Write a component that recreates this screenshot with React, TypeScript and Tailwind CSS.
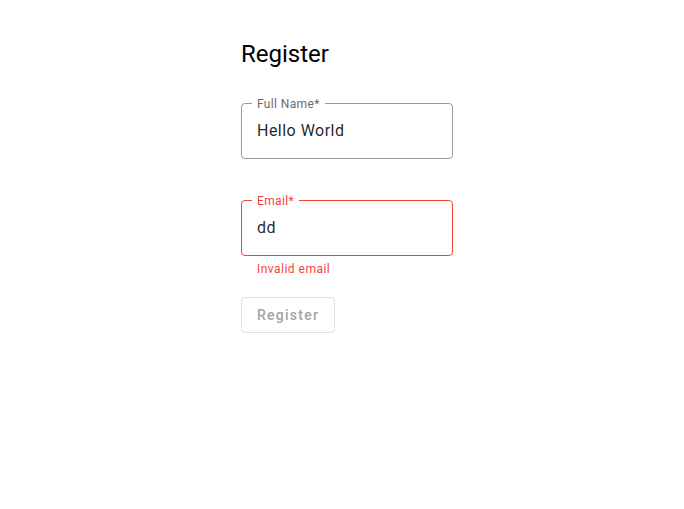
import React from 'react'

const Field: React.FC<{ label: string; value: string; error?: string; className?: string }> = ({
  label,
  value,
  error,
  className,
}) => {
  const border = error ? 'border-[#f44336]' : 'border-[#9a9a9a]'
  const labelColor = error ? 'text-[#f44336]' : 'text-[#6b6b6b]'
  return (
    <div className={className}>
      <div className={`relative h-[56px] w-[212px] rounded-[4px] border ${border} flex items-center`}>
        <span
          className={`absolute left-[10px] top-[-7px] bg-white px-[5px] text-[12px] leading-[14px] tracking-[0.03em] ${labelColor}`}
        >
          {label}*
        </span>
        <span className="pl-[15px] pb-[1px] text-[16px] leading-[19px] text-[rgba(0,0,0,0.87)] tracking-[0.03em]">
          {value}
        </span>
      </div>
      {error && (
        <p className="ml-[16px] mt-[3px] text-[12px] leading-[20px] text-[#f44336] tracking-[0.04em]">{error}</p>
      )}
    </div>
  )
}

export default function App() {
  return (
    <div className="min-h-[509px] bg-white pl-[241px] pt-[38px] font-['Roboto',sans-serif]">
      <h1 className="text-[24px] leading-[32px] font-normal text-black">Register</h1>
      <div className="mt-[33px] flex flex-col">
        <Field label="Full Name" value="Hello World" />
        <Field className="mt-[41px]" label="Email" value="dd" error="Invalid email" />
        <button
          disabled
          className="mt-[18px] h-[36px] w-[94px] rounded-[4px] border border-[#e0e0e0] text-[14px] font-medium tracking-[0.09em] text-[#a3a3a3]"
        >
          Register
        </button>
      </div>
    </div>
  )
}
